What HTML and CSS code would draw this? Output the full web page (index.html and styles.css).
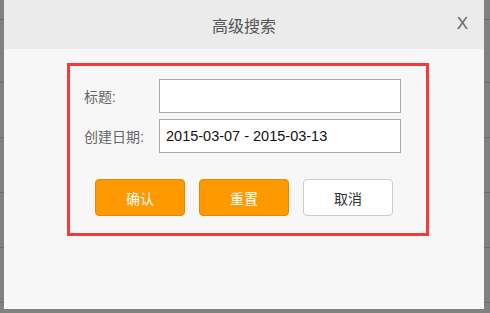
FILE: index.html
```html
<!DOCTYPE html>
<html lang="zh-CN">
<head>
    <meta charset="UTF-8">
    <title>高级搜索</title>
    <link rel="stylesheet" href="styles.css">
</head>
<body>
  <!-- dimmed list behind the dialog -->
  <div class="backdrop">
    <div class="row row-top"></div>
    <div class="row row-first"></div>
    <div class="row"></div>
    <div class="row"></div>
    <div class="row"></div>
    <div class="row"></div>
  </div>

  <div class="dialog">
    <div class="dialog-header">
      <span class="dialog-title">高级搜索</span>
      <span class="dialog-close">X</span>
    </div>

    <div class="dialog-body">
      <form class="search-box">
        <div class="field">
          <label class="field-label">标题:</label>
          <input type="text" class="field-input">
        </div>
        <div class="field">
          <label class="field-label">创建日期:</label>
          <input type="text" class="field-input" value="2015-03-07 - 2015-03-13">
        </div>
        <div class="actions">
          <button type="button" class="btn btn-orange">确认</button>
          <button type="button" class="btn btn-orange">重置</button>
          <button type="button" class="btn btn-plain">取消</button>
        </div>
      </form>
    </div>
  </div>
</body>
</html>
```

FILE: styles.css
```css
* {
    box-sizing: border-box;
    margin: 0;
    padding: 0;
    font-family: "Liberation Sans", "Noto Sans CJK SC", sans-serif;
}

body {
    width: 490px;
    height: 313px;
    background-color: #808080;
    overflow: hidden;
    position: relative;
}

.backdrop .row {
    height: 55px;
    border-bottom: 1px solid #6c6c6c;
}

.backdrop .row-top {
    height: 20px;
}

.backdrop .row-first {
    height: 63px;
}

.dialog {
    position: absolute;
    left: 4px;
    top: 0;
    width: 480px;
    height: 309px;
    background: #f7f7f7;
    display: flex;
    flex-direction: column;
}

.dialog-header {
    height: 49px;
    background: #ebebeb;
    display: flex;
    justify-content: center;
    align-items: center;
    position: relative;
}

.dialog-title {
    font-size: 16px;
    color: #555;
}

.dialog-close {
    position: absolute;
    right: 16px;
    top: 14px;
    font-size: 17px;
    color: #666;
}

.dialog-body {
    padding: 14px 0 0 63px;
}

.search-box {
    width: 362px;
    height: 173px;
    border: 3px solid #f43a3a;
    padding: 13px 25px 0 14px;
}

.field {
    display: flex;
    align-items: center;
    margin-bottom: 6px;
}

.field-label {
    width: 75px;
    font-size: 14px;
    color: #666;
}

.field-input {
    width: 242px;
    height: 34px;
    border: 1px solid #aaa;
    background: #fff;
    padding: 0 6px;
    font-size: 14.5px;
    color: #111;
    outline: none;
}

.actions {
    display: flex;
    gap: 14px;
    margin: 26px 0 0 11px;
}

.btn {
    width: 90px;
    height: 37px;
    border-radius: 4px;
    font-size: 14px;
    cursor: pointer;
}

.btn-orange {
    background: #ff9900;
    border: 1px solid #e5860f;
    color: #fff;
}

.btn-plain {
    background: #fff;
    border: 1px solid #ccc;
    color: #333;
}
```
